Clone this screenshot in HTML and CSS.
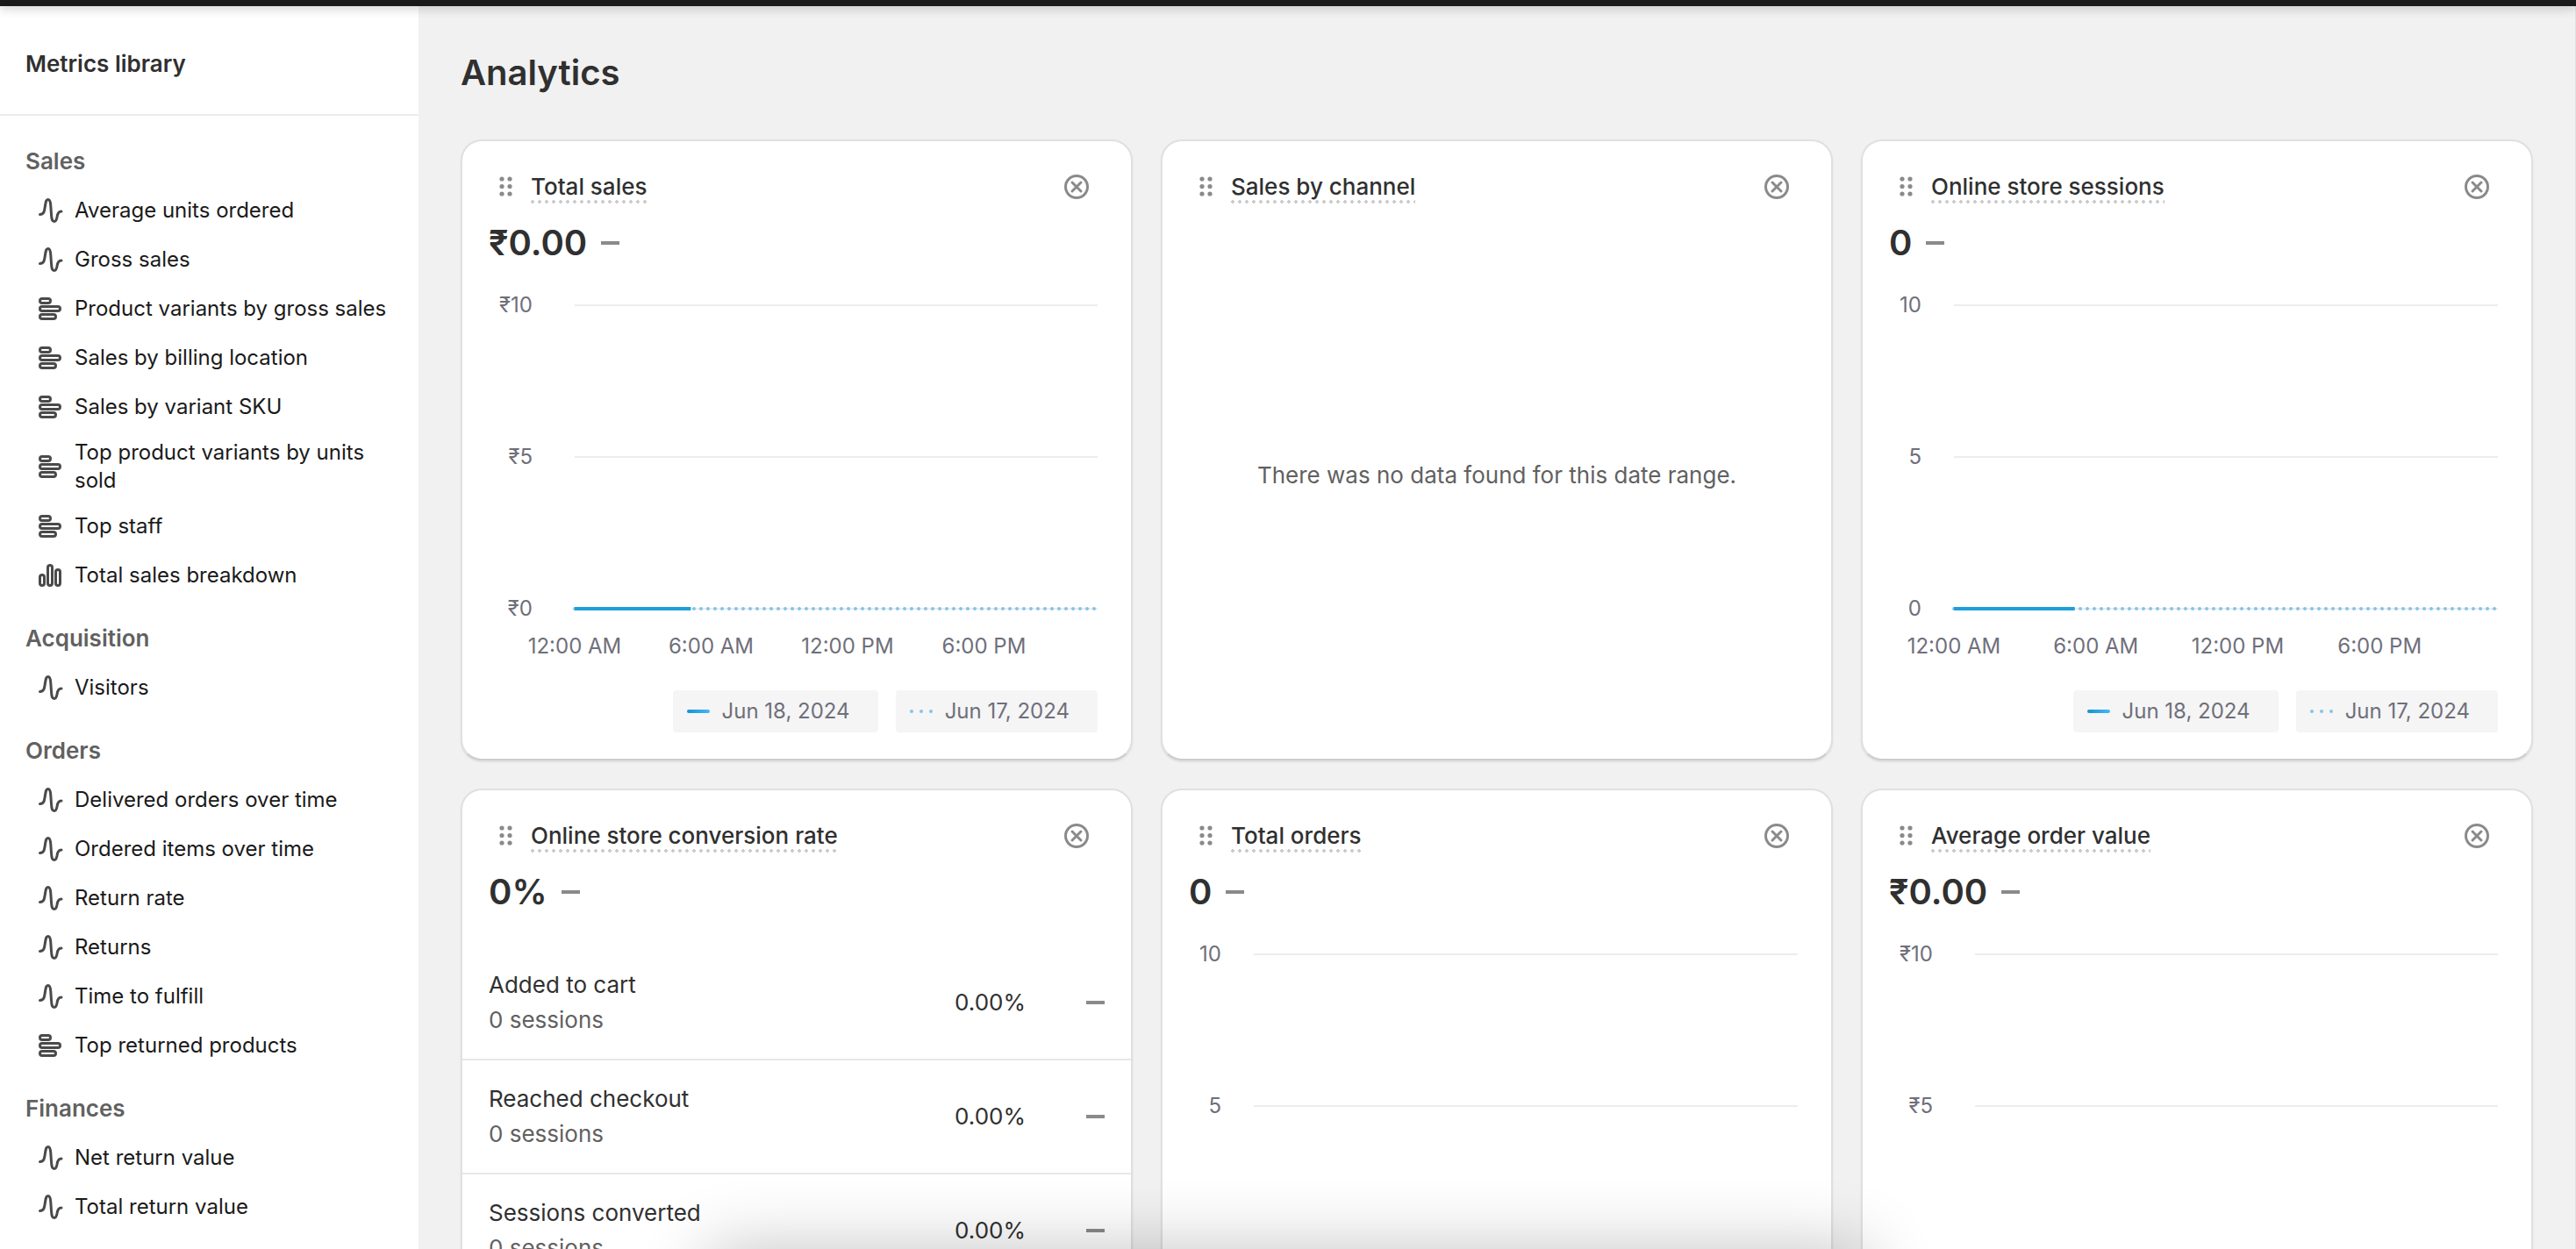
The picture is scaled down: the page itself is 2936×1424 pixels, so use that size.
FILE: index.html
```html
<!DOCTYPE html>
<html lang="en">
<head>
<meta charset="utf-8">
<meta name="viewport" content="width=device-width,initial-scale=1">
<title>Analytics</title>
<link rel="stylesheet" href="styles.css">
</head>
<body>
<!-- shared icons -->
<svg class="sprite" aria-hidden="true">
  <symbol id="i-line" viewBox="0 0 40 40"><path d="M8.500 24.500c5 0 5-4 6-10 .8-5 1.200-7 3.200-7s2.800 2 3.100 7l.7 10c.4 6 1 8 3.200 8s2.800-2 3.300-5c.5-4 1.500-6.500 5-6.500"/></symbol>
  <symbol id="i-rows" viewBox="0 0 40 40"><rect x="8.500" y="8.500" width="12" height="5" rx="2.500"/><rect x="8.500" y="17.500" width="23" height="5" rx="2.500"/><rect x="8.500" y="26.500" width="18" height="5" rx="2.500"/></symbol>
  <symbol id="i-bars" viewBox="0 0 40 40"><rect x="8.500" y="19.500" width="5" height="12" rx="2.500"/><rect x="17.500" y="8.500" width="5" height="23" rx="2.500"/><rect x="26.500" y="13.500" width="5" height="18" rx="2.500"/></symbol>
  <symbol id="i-drag" viewBox="0 0 40 40"><circle cx="15" cy="11" r="2.600"/><circle cx="24" cy="11" r="2.600"/><circle cx="15" cy="19.500" r="2.600"/><circle cx="24" cy="19.500" r="2.600"/><circle cx="15" cy="28" r="2.600"/><circle cx="24" cy="28" r="2.600"/></symbol>
  <symbol id="i-close" viewBox="0 0 40 40"><circle cx="20" cy="20" r="12.500"/><path d="M15 15l10 10M25 15l-10 10"/></symbol>
</svg>

<div class="topbar"></div>
<div class="layout">
  <aside class="sidebar">
    <header class="side-head"><h2>Metrics library</h2></header>
    <nav class="metrics">
      <h3>Sales</h3>
      <ul>
        <li><a href="#"><svg class="icon"><use href="#i-line"/></svg><span>Average units ordered</span></a></li>
        <li><a href="#"><svg class="icon"><use href="#i-line"/></svg><span>Gross sales</span></a></li>
        <li><a href="#"><svg class="icon"><use href="#i-rows"/></svg><span>Product variants by gross sales</span></a></li>
        <li><a href="#"><svg class="icon"><use href="#i-rows"/></svg><span>Sales by billing location</span></a></li>
        <li><a href="#"><svg class="icon"><use href="#i-rows"/></svg><span>Sales by variant SKU</span></a></li>
        <li><a href="#"><svg class="icon"><use href="#i-rows"/></svg><span>Top product variants by units sold</span></a></li>
        <li><a href="#"><svg class="icon"><use href="#i-rows"/></svg><span>Top staff</span></a></li>
        <li><a href="#"><svg class="icon"><use href="#i-bars"/></svg><span>Total sales breakdown</span></a></li>
      </ul>
      <h3>Acquisition</h3>
      <ul>
        <li><a href="#"><svg class="icon"><use href="#i-line"/></svg><span>Visitors</span></a></li>
      </ul>
      <h3>Orders</h3>
      <ul>
        <li><a href="#"><svg class="icon"><use href="#i-line"/></svg><span>Delivered orders over time</span></a></li>
        <li><a href="#"><svg class="icon"><use href="#i-line"/></svg><span>Ordered items over time</span></a></li>
        <li><a href="#"><svg class="icon"><use href="#i-line"/></svg><span>Return rate</span></a></li>
        <li><a href="#"><svg class="icon"><use href="#i-line"/></svg><span>Returns</span></a></li>
        <li><a href="#"><svg class="icon"><use href="#i-line"/></svg><span>Time to fulfill</span></a></li>
        <li><a href="#"><svg class="icon"><use href="#i-rows"/></svg><span>Top returned products</span></a></li>
      </ul>
      <h3>Finances</h3>
      <ul>
        <li><a href="#"><svg class="icon"><use href="#i-line"/></svg><span>Net return value</span></a></li>
        <li><a href="#"><svg class="icon"><use href="#i-line"/></svg><span>Total return value</span></a></li>
      </ul>
    </nav>
  </aside>

  <main class="main">
    <h1>Analytics</h1>
    <div class="grid">

      <section class="card">
        <header class="card-head">
          <svg class="drag"><use href="#i-drag"/></svg>
          <h2><a href="#">Total sales</a></h2>
          <button type="button" class="remove" aria-label="Remove Total sales"><svg><use href="#i-close"/></svg></button>
        </header>
        <p class="value">₹0.00 <i class="dash"></i></p>
        <div class="chart money">
          <svg class="plot">
            <g class="ticks"><text x="-48" y="19">₹10</text><text x="-48" y="192">₹5</text><text x="-48" y="365">₹0</text></g>
            <g class="rules"><line x2="100%" y1="11" y2="11"/><line x2="100%" y1="184" y2="184"/><line x2="100%" y1="357" y2="357"/></g>
            <line class="previous" x2="100%" y1="357" y2="357"/>
            <line class="current" x2="22.200%" y1="357" y2="357"/>
            <g class="hours"><text x="0" y="408">12:00 AM</text><text x="26.090%" y="408">6:00 AM</text><text x="52.170%" y="408">12:00 PM</text><text x="78.260%" y="408">6:00 PM</text></g>
          </svg>
        </div>
        <div class="legend">
          <span class="key"><i class="mark solid"></i>Jun 18, 2024</span>
          <span class="key"><i class="mark dots"><b></b><b></b><b></b></i>Jun 17, 2024</span>
        </div>
      </section>

      <section class="card">
        <header class="card-head">
          <svg class="drag"><use href="#i-drag"/></svg>
          <h2><a href="#">Sales by channel</a></h2>
          <button type="button" class="remove" aria-label="Remove Sales by channel"><svg><use href="#i-close"/></svg></button>
        </header>
        <p class="empty">There was no data found for this date range.</p>
      </section>

      <section class="card">
        <header class="card-head">
          <svg class="drag"><use href="#i-drag"/></svg>
          <h2><a href="#">Online store sessions</a></h2>
          <button type="button" class="remove" aria-label="Remove Online store sessions"><svg><use href="#i-close"/></svg></button>
        </header>
        <p class="value">0 <i class="dash"></i></p>
        <div class="chart">
          <svg class="plot">
            <g class="ticks"><text x="-37" y="19">10</text><text x="-37" y="192">5</text><text x="-37" y="365">0</text></g>
            <g class="rules"><line x2="100%" y1="11" y2="11"/><line x2="100%" y1="184" y2="184"/><line x2="100%" y1="357" y2="357"/></g>
            <line class="previous" x2="100%" y1="357" y2="357"/>
            <line class="current" x2="22.200%" y1="357" y2="357"/>
            <g class="hours"><text x="0" y="408">12:00 AM</text><text x="26.090%" y="408">6:00 AM</text><text x="52.170%" y="408">12:00 PM</text><text x="78.260%" y="408">6:00 PM</text></g>
          </svg>
        </div>
        <div class="legend">
          <span class="key"><i class="mark solid"></i>Jun 18, 2024</span>
          <span class="key"><i class="mark dots"><b></b><b></b><b></b></i>Jun 17, 2024</span>
        </div>
      </section>

      <section class="card">
        <header class="card-head">
          <svg class="drag"><use href="#i-drag"/></svg>
          <h2><a href="#">Online store conversion rate</a></h2>
          <button type="button" class="remove" aria-label="Remove Online store conversion rate"><svg><use href="#i-close"/></svg></button>
        </header>
        <p class="value">0% <i class="dash"></i></p>
        <table class="funnel">
          <tr><th scope="row">Added to cart<small>0 sessions</small></th><td>0.00%</td><td class="change"><i class="dash"></i></td></tr>
          <tr><th scope="row">Reached checkout<small>0 sessions</small></th><td>0.00%</td><td class="change"><i class="dash"></i></td></tr>
          <tr><th scope="row">Sessions converted<small>0 sessions</small></th><td>0.00%</td><td class="change"><i class="dash"></i></td></tr>
        </table>
      </section>

      <section class="card">
        <header class="card-head">
          <svg class="drag"><use href="#i-drag"/></svg>
          <h2><a href="#">Total orders</a></h2>
          <button type="button" class="remove" aria-label="Remove Total orders"><svg><use href="#i-close"/></svg></button>
        </header>
        <p class="value">0 <i class="dash"></i></p>
        <div class="chart">
          <svg class="plot">
            <g class="ticks"><text x="-37" y="19">10</text><text x="-37" y="192">5</text></g>
            <g class="rules"><line x2="100%" y1="11" y2="11"/><line x2="100%" y1="184" y2="184"/></g>
          </svg>
        </div>
      </section>

      <section class="card">
        <header class="card-head">
          <svg class="drag"><use href="#i-drag"/></svg>
          <h2><a href="#">Average order value</a></h2>
          <button type="button" class="remove" aria-label="Remove Average order value"><svg><use href="#i-close"/></svg></button>
        </header>
        <p class="value">₹0.00 <i class="dash"></i></p>
        <div class="chart money">
          <svg class="plot">
            <g class="ticks"><text x="-48" y="19">₹10</text><text x="-48" y="192">₹5</text></g>
            <g class="rules"><line x2="100%" y1="11" y2="11"/><line x2="100%" y1="184" y2="184"/></g>
          </svg>
        </div>
      </section>

    </div>
  </main>
</div>
<div class="savebar"></div>
</body>
</html>
```
FILE: styles.css
```css
:root{--bg:#f1f1f1;--card:#fff;--txt:#303030;--muted:#616161;--axis:#6f6f7b;--line:#ebebeb;--icon:#4a4a4a;--soft:#8a8a8a;--blue:#1e9fd9;--sky:#84c4e8}
*{box-sizing:border-box}
body{margin:0;height:100vh;overflow:hidden;display:flex;flex-direction:column;background:var(--bg);color:var(--txt);font-family:Inter,"Liberation Sans",sans-serif;font-size:26px;line-height:40px}
h1,h2,h3,p,ul{margin:0;padding:0}
ul{list-style:none}
a{color:inherit;text-decoration:none}
.sprite{display:none}
.topbar{flex:none;height:7px;background:#1a1a1a;box-shadow:0 2px 12px rgba(0,0,0,.25);z-index:1}
.layout{flex:1;min-height:0;display:flex}

/* sidebar */
.sidebar{flex:none;width:477px;overflow:hidden;background:var(--card)}
.side-head{padding:46px 29px 37px;border-bottom:2px solid var(--line)}
.side-head h2{font-size:26px;font-weight:600}
.metrics{padding:8px 29px}
.metrics h3{margin:24px 0 8px;font-size:26px;font-weight:600;color:var(--muted)}
.metrics a{display:flex;align-items:center;gap:8px;padding:8px 0 8px 8px;font-size:24px;line-height:32px;color:#1a1a1a}
.icon{flex:none;width:40px;height:40px;fill:none;stroke:var(--icon);stroke-width:3;stroke-linecap:round}

/* cards */
.main{flex:1;min-width:0;overflow:hidden;padding:52px 48px 0;border-right:1px solid #e0e0e0}
h1{font-size:40px;line-height:48px;font-weight:600}
.grid{display:grid;grid-template-columns:repeat(3,minmax(0,1fr));grid-auto-rows:708px;gap:32px;margin-top:52px}
.card{display:flex;flex-direction:column;background:var(--card);border:2px solid #e0e0e0;border-bottom-color:#ccc;border-radius:24px;box-shadow:0 2px 2px rgba(0,0,0,.08)}
.card-head{display:flex;align-items:center;padding:32px 42px 0 30px}
.drag{flex:none;width:40px;height:40px;margin-right:8px;fill:var(--soft)}
.card-head h2{flex:1;font-size:26px;font-weight:500}
.card-head h2 a{display:inline-block;line-height:38px;background:radial-gradient(circle at 2px 2px,#ccc 2px,transparent 2px) 0 100%/8px 4px repeat-x}
.remove{width:40px;height:40px;padding:0;border:0;background:none;cursor:pointer}
.remove svg{display:block;width:40px;height:40px;fill:none;stroke:var(--soft);stroke-width:3;stroke-linecap:round}
.value{display:flex;align-items:center;gap:16px;margin-top:20px;padding:0 30px;font-size:40px;line-height:48px;font-weight:600}
.dash{display:block;width:21px;height:4px;background:var(--soft)}
.empty{margin:auto;padding-bottom:14px;color:var(--muted)}

/* line charts */
.chart{margin-top:36px;padding:0 38px 0 104px}
.chart.money{padding-left:128px}
.plot{display:block;width:100%;height:420px;overflow:visible;font-size:24px;fill:var(--axis)}
.ticks{text-anchor:end}
.hours{text-anchor:middle}
.rules{stroke:#ededed;stroke-width:2}
.current{stroke:var(--blue);stroke-width:4}
.previous{stroke:var(--sky);stroke-width:4;stroke-linecap:round;stroke-dasharray:0 8}
.legend{display:flex;justify-content:flex-end;gap:20px;margin-top:30px;padding:0 38px}
.key{display:flex;align-items:center;gap:14px;padding:8px 32px 8px 16px;border-radius:4px;background:#f5f5f5;color:var(--axis);font-size:24px;line-height:32px}
.mark{display:flex;justify-content:space-between;width:26px;height:4px;border-radius:2px}
.solid{background:linear-gradient(90deg,#1793d0,#45b8f5)}
.dots b{width:4px;height:4px;border-radius:50%;background:var(--sky)}

/* conversion funnel */
.funnel{width:100%;margin-top:38px;border-collapse:collapse}
.funnel tr + tr{border-top:2px solid #e8e8e8}
.funnel th{padding:24px 30px;text-align:left;font-weight:400}
.funnel small{display:block;font-size:26px;color:var(--muted)}
.funnel td{padding:0;text-align:right}
.funnel .change{width:120px;padding-right:30px}
.change .dash{margin-left:auto}

.savebar{position:fixed;left:50%;top:100%;width:1320px;height:100px;transform:translateX(-50%);box-shadow:0 0 80px rgba(0,0,0,.24)}
```
